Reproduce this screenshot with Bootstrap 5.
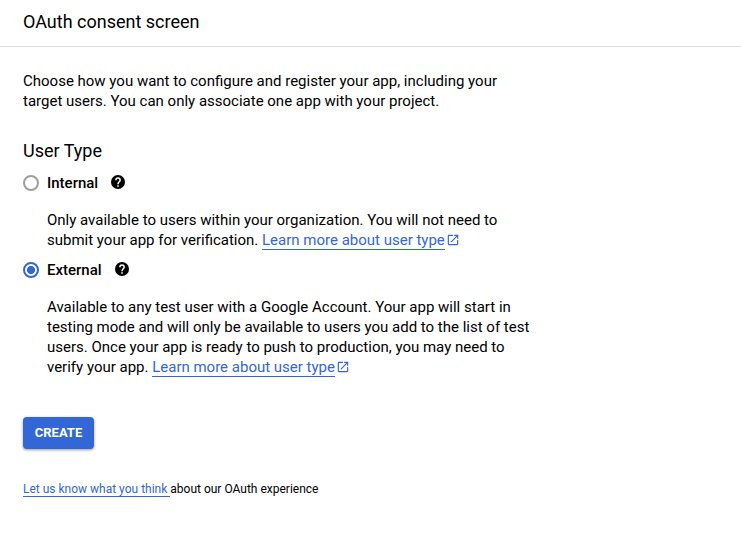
<!DOCTYPE html>
<html lang="en">
<head>
<meta charset="utf-8">
<title>OAuth consent screen</title>
<link href="https://cdn.jsdelivr.net/npm/bootstrap@5.3.0/dist/css/bootstrap.min.css" rel="stylesheet">
<style>
body{font-family:Roboto,"Liberation Sans",sans-serif;font-size:15px;line-height:20px;color:#000;background:#fff}
.page-head{height:47px;border-bottom:1px solid #dcdcdc;padding:0 23px 3px}
h1,h2{font-size:18px;line-height:24px;font-weight:400;color:#000}
main{padding:24px 23px 0}
.type-title{margin-top:28px}
.opt-row{height:24px}
.opt-row .form-check-input{width:16px;height:16px;border:2px solid #9e9e9e;background:#fff;box-shadow:none}
.opt-row .form-check-input:checked{border-color:#3367d6;background:radial-gradient(circle at center,#3367d6 3.7px,#fff 4.4px)}
.opt-name{font-weight:500;margin-left:8px;margin-right:12px}
.help-icon{width:16px;height:16px;margin-top:-2px}
.opt-text{margin-left:24px;padding-top:15px}
.doc-link{color:#3367d6;text-decoration:none;border-bottom:1px solid #3367d6}
.ext-icon{width:14px;height:14px;margin-left:1px;color:#3367d6;vertical-align:-2px}
.create-btn,.create-btn:hover{background:#3367d6;color:#fff}
.create-btn{border:0;border-radius:4px;width:71px;height:32px;margin-top:40px;font-size:13px;line-height:20px;box-shadow:0 1px 3px rgba(0,0,0,.4)}
.feedback{font-size:12px;line-height:16px;margin-top:32px}
</style>
<script src="https://cdn.jsdelivr.net/npm/bootstrap@5.3.0/dist/js/bootstrap.bundle.min.js"></script>
</head>
<body>
<svg class="d-none">
<symbol id="help" viewBox="0 0 24 24"><circle cx="12" cy="12" r="10.500"/><path fill="none" stroke="#fff" stroke-width="2.300" d="M8.800 9.200a3.200 3.200 0 0 1 6.400 0c0 2.300-3.200 2.700-3.200 6M12 16.800v2.400"/></symbol>
<symbol id="ext" viewBox="0 0 24 24"><path fill="currentColor" d="M19 19H5V5h7V3H5c-1.110 0-2 .9-2 2v14c0 1.100.89 2 2 2h14c1.100 0 2-.9 2-2v-7h-2v7zM14 3v2h3.590l-9.830 9.830 1.410 1.410L19 6.410V10h2V3h-7z"/></symbol>
</svg>
<header class="page-head d-flex align-items-center"><h1 class="m-0">OAuth consent screen</h1></header>
<main>
<p class="m-0">Choose how you want to configure and register your app, including your<br>target users. You can only associate one app with your project.</p>
<h2 class="type-title mb-2">User Type</h2>
<section class="mb-2">
<div class="opt-row d-flex align-items-center">
<input class="form-check-input m-0" type="radio" name="userType" id="internal">
<label class="opt-name" for="internal">Internal</label>
<svg class="help-icon"><use href="#help"/></svg>
</div>
<p class="opt-text mb-0">Only available to users within your organization. You will not need to<br>submit your app for verification. <a class="doc-link" href="#">Learn more about user type</a><svg class="ext-icon"><use href="#ext"/></svg></p>
</section>
<section>
<div class="opt-row d-flex align-items-center">
<input class="form-check-input m-0" type="radio" name="userType" id="external" checked>
<label class="opt-name" for="external">External</label>
<svg class="help-icon"><use href="#help"/></svg>
</div>
<p class="opt-text mb-0">Available to any test user with a Google Account. Your app will start in<br>testing mode and will only be available to users you add to the list of test<br>users. Once your app is ready to push to production, you may need to<br>verify your app. <a class="doc-link" href="#">Learn more about user type</a><svg class="ext-icon"><use href="#ext"/></svg></p>
</section>
<button type="button" class="btn create-btn d-block p-0 fw-bold">CREATE</button>
<p class="feedback mb-0"><a class="doc-link" href="#">Let us know what you think </a>about our OAuth experience</p>
</main>
</body>
</html>
